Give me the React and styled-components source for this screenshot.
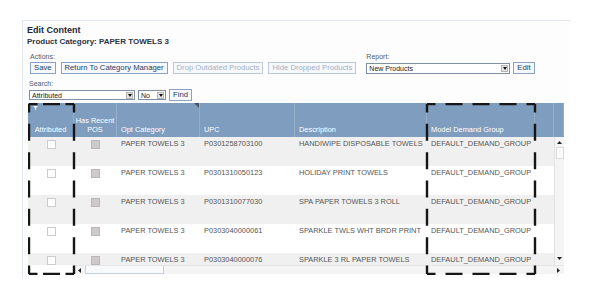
import styled, { createGlobalStyle } from "styled-components"

const GlobalStyle = createGlobalStyle`
  html, body {
    margin: 0;
    padding: 0;
    background: #fff;
  }
  body {
    font-family: "Liberation Sans", Arial, sans-serif;
    color: #333;
  }
`

const COLUMNS = "46px 43px 83px 95px 132px 108px 19px"

const rows = [
  { upc: "P0301258703100", desc: "HANDIWIPE DISPOSABLE TOWELS" },
  { upc: "P0301310050123", desc: "HOLIDAY PRINT TOWELS" },
  { upc: "P0301310077030", desc: "SPA PAPER TOWELS 3 ROLL" },
  { upc: "P0303040000061", desc: "SPARKLE TWLS WHT BRDR PRINT" },
  { upc: "P0303040000076", desc: "SPARKLE 3 RL PAPER TOWELS" },
]

const Page = styled.div`
  padding: 20px 0 0 22px;
  height: 292px;
  box-sizing: border-box;
`

const Panel = styled.div`
  width: 548px;
  height: 258px;
  box-sizing: border-box;
  border-top: 1px solid #e3e7ee;
  border-left: 1px solid #e3e7ee;
  background: #fdfdfe;
  padding: 4px 0 0 4px;
`

const Title = styled.h1`
  margin: 0;
  font-size: 9px;
  line-height: 11px;
  font-weight: 700;
  color: #1f2633;
`

const Subtitle = styled.h2`
  margin: 1px 0 0;
  font-size: 8px;
  line-height: 10px;
  font-weight: 700;
  color: #2e3440;
`

const ToolbarRow = styled.div`
  display: flex;
  gap: 10px;
  margin: 5px 0 0 3px;
`

const Group = styled.div`
  display: flex;
  flex-direction: column;
`

const Label = styled.div`
  font-size: 7px;
  line-height: 9px;
  color: #4d5b73;
  margin-bottom: 1px;
`

const Controls = styled.div`
  display: flex;
  align-items: center;
  gap: ${(p) => p.$gap || 5}px;
  height: 12px;
`

const Button = styled.button`
  height: 12px;
  padding: 0 3px;
  margin: 0;
  border: 1px solid ${(p) => (p.disabled ? "#bccadc" : "#8aa3c4")};
  background: #f6f8fb;
  color: ${(p) => (p.disabled ? "#a3b2c7" : "#22406a")};
  font-family: "Liberation Sans", Arial, sans-serif;
  font-size: 7.7px;
  line-height: 10px;
  white-space: nowrap;
  cursor: pointer;
`

const Select = styled.div`
  width: ${(p) => p.$width}px;
  height: ${(p) => p.$height || 10}px;
  box-sizing: border-box;
  border: 1px solid #7f8fa6;
  background: #fff;
  display: flex;
  align-items: center;
  justify-content: space-between;
  padding: 0 1px 0 2px;
  font-size: 7px;
  color: #222;
`

const SelectArrow = styled.span`
  width: 7px;
  height: 7px;
  background: #e4e4e4;
  border: 1px solid #b5b5b5;
  box-sizing: border-box;
  display: flex;
  align-items: center;
  justify-content: center;
`

const SearchGroup = styled(Group)`
  margin: 5px 0 0 2px;
`

const TableWrap = styled.div`
  position: relative;
  width: 536px;
  margin: 2px 0 0 1px;
`

const HeaderRow = styled.div`
  display: grid;
  grid-template-columns: ${COLUMNS} 10px;
  height: 34px;
  background: #7e9dbf;
`

const HeaderCell = styled.div`
  position: relative;
  display: flex;
  align-items: flex-end;
  justify-content: ${(p) => (p.$center ? "center" : "flex-start")};
  text-align: ${(p) => (p.$center ? "center" : "left")};
  padding: ${(p) => (p.$center ? "0 0 3px" : "0 4px 3px")};
  box-sizing: border-box;
  color: #fff;
  font-size: 7.4px;
  line-height: 8.5px;
  white-space: nowrap;
  border-right: 1px solid rgba(255, 255, 255, 0.18);
`

const Corner = styled.svg`
  position: absolute;
  top: 0;
  right: 0;
`

const Funnel = styled.svg`
  position: absolute;
  top: 3px;
  left: 5px;
`

const Body = styled.div`
  display: flex;
  height: 128px;
`

const RowsArea = styled.div`
  width: 526px;
  height: 128px;
  overflow: hidden;
`

const Row = styled.div`
  display: grid;
  grid-template-columns: ${COLUMNS};
  height: 29px;
  background: ${(p) => (p.$shaded ? "#f0f0f0" : "#fff")};
`

const Cell = styled.div`
  padding: 2px 4px 0;
  display: flex;
  justify-content: ${(p) => (p.$center ? "center" : "flex-start")};
  font-size: 7.4px;
  line-height: 9px;
  color: #555;
  white-space: nowrap;
`

const Check = styled.span`
  display: block;
  width: 9px;
  height: 9px;
  box-sizing: border-box;
  margin-top: 1px;
  border: 1px solid ${(p) => (p.$filled ? "#bcb7b7" : "#cccccc")};
  background: ${(p) => (p.$filled ? "#cfcaca" : "#fff")};
`

const VScroll = styled.div`
  width: 10px;
  height: 128px;
  box-sizing: border-box;
  background: #f4f4f4;
  border-left: 1px solid #e2e2e2;
  display: flex;
  flex-direction: column;
  align-items: center;
  justify-content: space-between;
  padding: 3px 0 4px;
`

const Thumb = styled.div`
  width: 8px;
  height: 12px;
  margin-top: 2px;
  box-sizing: border-box;
  border: 1px solid #dcdcdc;
  background: #fafafa;
  flex-shrink: 0;
`

const ScrollColumn = styled.div`
  display: flex;
  flex-direction: column;
  align-items: center;
`

const HScrollRow = styled.div`
  display: flex;
  height: 9px;
`

const FrozenGap = styled.div`
  width: 46px;
  background: #fff;
`

const HScroll = styled.div`
  flex: 1;
  display: flex;
  align-items: center;
  gap: 3px;
  padding: 0 3px;
  background: #f4f4f4;
  border-top: 1px solid #e6e6e6;
`

const HThumb = styled.div`
  width: 79px;
  height: 8px;
  box-sizing: border-box;
  border: 1px solid #c4d0df;
  border-top: none;
  background: #f8f9fb;
`

const Spacer = styled.div`
  flex: 1;
`

const Frames = styled.svg`
  position: absolute;
  top: 0;
  left: 0;
  pointer-events: none;
`

const Arrow = ({ dir }) => {
  const pts = {
    up: "0,4 2.5,1 5,4",
    down: "0,1 2.5,4 5,1",
    left: "4,0 1,2.5 4,5",
    right: "1,0 4,2.5 1,5",
  }
  return (
    <svg width="5" height="5" viewBox="0 0 5 5">
      <polygon points={pts[dir]} fill="#222" />
    </svg>
  )
}

const dashes = (len, d = 17, g0 = 10) => {
  const n = Math.max(0, Math.round((len - d - g0) / (d + g0)))
  const g = (len - d - n * d) / (n + 1)
  const list = [d / 2]
  for (let i = 0; i < n; i++) list.push(g, d)
  list.push(g, d / 2)
  return list.join(" ")
}

const DashedBox = ({ x1, x2, y1, y2 }) => {
  const w = x2 - x1
  const h = y2 - y1
  const common = { stroke: "#161616", strokeWidth: 2.4, fill: "none" }
  return (
    <g>
      <line x1={x1} y1={y1} x2={x2} y2={y1} strokeDasharray={dashes(w)} {...common} />
      <line x1={x1} y1={y2} x2={x2} y2={y2} strokeDasharray={dashes(w)} {...common} />
      <line x1={x1} y1={y1} x2={x1} y2={y2} strokeDasharray={dashes(h)} {...common} />
      <line x1={x2} y1={y1} x2={x2} y2={y2} strokeDasharray={dashes(h)} {...common} />
    </g>
  )
}

const Dropdown = ({ width, height, children }) => (
  <Select $width={width} $height={height}>
    <span>{children}</span>
    <SelectArrow>
      <svg width="4" height="3" viewBox="0 0 4 3">
        <polygon points="0,0 4,0 2,3" fill="#111" />
      </svg>
    </SelectArrow>
  </Select>
)

const App = () => {
  return (
    <>
      <GlobalStyle />
      <Page>
        <Panel>
          <Title>Edit Content</Title>
          <Subtitle>Product Category: PAPER TOWELS 3</Subtitle>

          <ToolbarRow>
            <Group>
              <Label>Actions:</Label>
              <Controls>
                <Button>Save</Button>
                <Button>Return To Category Manager</Button>
                <Button disabled>Drop Outdated Products</Button>
                <Button disabled>Hide Dropped Products</Button>
              </Controls>
            </Group>
            <Group>
              <Label>Report:</Label>
              <Controls $gap={3}>
                <Dropdown width={144} height={11}>New Products</Dropdown>
                <Button>Edit</Button>
              </Controls>
            </Group>
          </ToolbarRow>

          <SearchGroup>
            <Label>Search:</Label>
            <Controls $gap={3}>
              <Dropdown width={106}>Attributed</Dropdown>
              <Dropdown width={28}>No</Dropdown>
              <Button>Find</Button>
            </Controls>
          </SearchGroup>

          <TableWrap>
            <HeaderRow>
              <HeaderCell $center>
                <Funnel width="5" height="4" viewBox="0 0 5 4">
                  <polygon points="0,0 5,0 3,2 3,4 2,4 2,2" fill="#fff" />
                </Funnel>
                Attributed
              </HeaderCell>
              <HeaderCell $center>Has Recent<br />POS</HeaderCell>
              <HeaderCell>
                Opt Category
                <Corner width="5" height="5" viewBox="0 0 5 5">
                  <polygon points="0,0 5,0 5,5" fill="#4a5566" />
                </Corner>
              </HeaderCell>
              <HeaderCell>UPC</HeaderCell>
              <HeaderCell>Description</HeaderCell>
              <HeaderCell>Model Demand Group</HeaderCell>
              <HeaderCell />
              <HeaderCell />
            </HeaderRow>

            <Body>
              <RowsArea>
                {rows.map((r, i) => (
                  <Row key={r.upc} $shaded={i % 2 === 0}>
                    <Cell $center><Check /></Cell>
                    <Cell $center><Check $filled /></Cell>
                    <Cell>PAPER TOWELS 3</Cell>
                    <Cell>{r.upc}</Cell>
                    <Cell>{r.desc}</Cell>
                    <Cell>DEFAULT_DEMAND_GROUP</Cell>
                    <Cell />
                  </Row>
                ))}
              </RowsArea>
              <VScroll>
                <ScrollColumn>
                  <Arrow dir="up" />
                  <Thumb />
                </ScrollColumn>
                <Arrow dir="down" />
              </VScroll>
            </Body>

            <HScrollRow>
              <FrozenGap />
              <HScroll>
                <Arrow dir="left" />
                <HThumb />
                <Spacer />
                <Arrow dir="right" />
              </HScroll>
            </HScrollRow>

            <Frames width="536" height="172" viewBox="0 0 536 172">
              <DashedBox x1={1} x2={46} y1={1} y2={171} />
              <DashedBox x1={399} x2={507} y1={1} y2={171} />
            </Frames>
          </TableWrap>
        </Panel>
      </Page>
    </>
  )
}

export default App
